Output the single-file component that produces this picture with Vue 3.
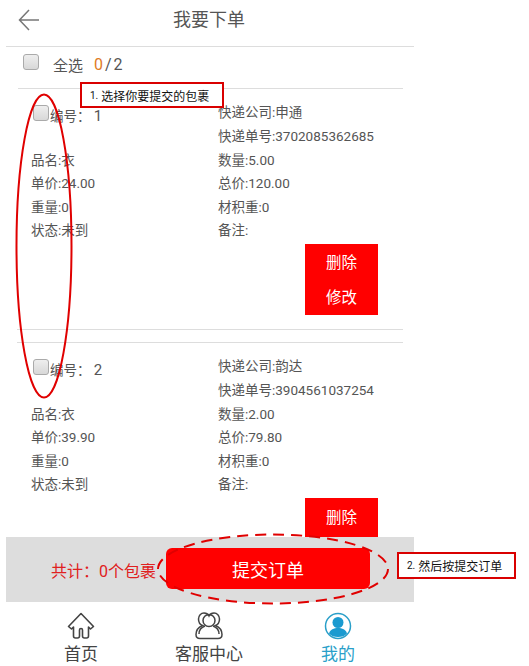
<script setup>
const packages = [
  { no: 1, company: '申通', tracking: '3702085362685', name: '衣', qty: '5.00', price: '24.00', total: '120.00', weight: '0', volume: '0', status: '未到', actions: ['删除', '修改'] },
  { no: 2, company: '韵达', tracking: '3904561037254', name: '衣', qty: '2.00', price: '39.90', total: '79.80', weight: '0', volume: '0', status: '未到', actions: ['删除'] },
]
const rows = (p) => [
  ['品名:' + p.name, '数量:' + p.qty],
  ['单价:' + p.price, '总价:' + p.total],
  ['重量:' + p.weight, '材积重:' + p.volume],
  ['状态:' + p.status, '备注:'],
]
</script>

<template>
  <div class="page">
    <div class="phone">
      <header class="top">
        <svg class="back" width="22" height="22" viewBox="0 0 22 22" fill="none" stroke="#777" stroke-width="1.5">
          <path d="M21 11H2M11 1 1.500 11 11 21" />
        </svg>
        <h1>我要下单</h1>
      </header>

      <div class="select-all">
        <span class="box"></span>
        <span class="all-label">全选</span>
        <span class="count"><b>0</b>/2</span>
      </div>

      <main class="list">
        <section v-for="p in packages" :key="p.no" class="pkg">
          <div class="head">
            <div class="no">
              <span class="box pkg-box"></span>
              <span class="no-text">编号： <em>{{ p.no }}</em></span>
            </div>
            <div class="ship">
              <div>快递公司:{{ p.company }}</div>
              <div>快递单号:{{ p.tracking }}</div>
            </div>
          </div>
          <div v-for="(r, i) in rows(p)" :key="i" class="row">
            <div>{{ r[0] }}</div>
            <div>{{ r[1] }}</div>
          </div>
          <div class="actions">
            <button v-for="a in p.actions" :key="a">{{ a }}</button>
          </div>
        </section>
      </main>

      <div class="submit-bar">
        <span class="total">共计：0个包裹</span>
        <button class="submit">提交订单</button>
      </div>

      <nav class="tabs">
        <a class="tab">
          <svg width="28" height="28" viewBox="0 0 28 28" fill="none" stroke="#444" stroke-width="1.6" stroke-linejoin="round">
            <path d="M14 1.500 1.500 14.500l3 2.500 2-2V24q0 2 2 2h2q2 0 2-2v-6q0-1.500 1.500-1.500t1.500 1.500v6q0 2 2 2h2q2 0 2-2v-9l2 2 3-2.500Z" />
          </svg>
          <span>首页</span>
        </a>
        <a class="tab">
          <svg width="28" height="28" viewBox="0 0 28 28" fill="none" stroke="#444" stroke-width="1.500">
            <path d="M14 4c-1-2-3-3-5-3C6 1 3.500 3.500 3.500 7c0 3 1.500 5.500 4 6.500C4 15 1 18.500 1 22.500 1 25 2.500 26.500 5 26.500h18c2.500 0 4-1.500 4-4 0-4-3-7.500-6.500-9 2.500-1 4-3.500 4-6.500 0-3.500-2.500-6-5.500-6-2 0-4 1-5 3Z" />
            <circle cx="14" cy="8.500" r="6" />
            <path d="M10 14c-3.500 1.200-6 4.500-6 8M18 14c3.500 1.200 6 4.500 6 8" />
          </svg>
          <span>客服中心</span>
        </a>
        <a class="tab active">
          <svg width="28" height="28" viewBox="0 0 28 28">
            <circle cx="14" cy="14" r="12.500" fill="none" stroke="#2a9fc9" stroke-width="1.500" />
            <circle cx="14" cy="10.500" r="5.500" fill="#1a9ad0" />
            <path d="M5 21.500c1-4 5-5.500 9-5.500s8 1.500 9 5.500c-2 2.500-5 3.500-9 3.500s-7-1-9-3.500Z" fill="#1a9ad0" />
          </svg>
          <span>我的</span>
        </a>
      </nav>
    </div>

    <div class="note note-one"><small>1.</small> 选择你要提交的包裹</div>
    <div class="note note-two"><small>2.</small> 然后按提交订单</div>
    <svg class="ring ring-list" width="58" height="306" viewBox="0 0 58 306" fill="none">
      <ellipse cx="29" cy="153" rx="27.500" ry="151.500" stroke="#e00000" stroke-width="2" />
    </svg>
    <svg class="ring ring-submit" width="236" height="74" viewBox="0 0 236 74" fill="none">
      <ellipse cx="118" cy="37" rx="115" ry="34.500" stroke="#e00000" stroke-width="2" stroke-dasharray="11 7" />
    </svg>
  </div>
</template>

<style>
html, body { margin: 0; background: #fff; }
</style>

<style scoped>
.page {
  position: relative;
  width: 529px;
  height: 666px;
  overflow: hidden;
  background: #fff;
  font-family: Roboto, "Noto Sans CJK SC", sans-serif;
  font-size: 13.500px;
  color: #555;
}
.phone {
  width: 414px;
  height: 666px;
  display: flex;
  flex-direction: column;
}
.top {
  position: relative;
  flex: none;
  height: 46px;
  margin-left: 6px;
  border-bottom: 1px solid #ddd;
  display: flex;
  align-items: center;
  justify-content: center;
  padding-right: 2px;
}
.top h1 {
  margin: 0 0 10px;
  font-size: 18px;
  font-weight: 400;
  color: #555;
}
.back { position: absolute; left: 12px; top: 9px; }
.select-all {
  flex: none;
  box-sizing: border-box;
  height: 42px;
  padding-bottom: 6px;
  margin: 0 11px 0 18px;
  border-bottom: 1px solid #ddd;
  display: flex;
  align-items: center;
  font-size: 15px;
}
.box {
  box-sizing: border-box;
  display: block;
  width: 16px;
  height: 16px;
  border: 1px solid #aaa;
  border-radius: 3px;
  background: linear-gradient(#eee, #d8d8d8);
}
.select-all .box { margin: 0 0 5px 5px; }
.all-label { margin-left: 14px; }
.count { margin-left: 11px; font-size: 16px; letter-spacing: 2px; }
.count b { font-weight: 400; color: #e07b1f; }
.list { flex: 1; min-height: 0; overflow: hidden; }
.pkg {
  margin: 0 11px 12px 17px;
  padding: 12px 25px 14px 14px;
  border-bottom: 1px solid #ddd;
}
.pkg:last-child { border-bottom: 0; padding-bottom: 0; margin-bottom: 0; }
.pkg + .pkg { border-top: 1px solid #ddd; }
.head, .row {
  display: grid;
  grid-template-columns: 187px 1fr;
  line-height: 23.500px;
  white-space: nowrap;
}
.row { position: relative; top: 0.500px; }
.no { display: flex; align-items: flex-start; }
.pkg-box { margin: 4px 0 0 2px; flex: none; }
.no-text { margin-left: 1px; padding-top: 4px; }
.no-text em { font-style: normal; font-size: 15px; }
.actions {
  display: flex;
  flex-direction: column;
  align-items: flex-end;
  margin-top: 2px;
}
.actions button {
  width: 73px;
  height: 35.500px;
  padding: 0 0 2px;
  border: 0;
  background: #f00;
  color: #fff;
  font: inherit;
  font-size: 15.500px;
}
.pkg:last-child .actions button { height: 39px; padding-bottom: 4px; }
.submit-bar {
  flex: none;
  box-sizing: border-box;
  height: 65px;
  margin-left: 6px;
  background: #ddd;
  display: flex;
  align-items: center;
  padding-left: 45px;
}
.total { color: #e02020; font-size: 16px; white-space: nowrap; }
.submit {
  width: 204px;
  height: 41px;
  margin: 0 0 2px 10px;
  border: 0;
  border-radius: 6px;
  background: #f00;
  color: #fff;
  font: inherit;
  font-size: 18px;
}
.tabs {
  flex: none;
  height: 64px;
  display: grid;
  grid-template-columns: 162px 94px 164px;
}
.tab {
  display: flex;
  flex-direction: column;
  align-items: center;
  color: #444;
  font-size: 17px;
  line-height: 22px;
  padding-top: 10px;
  white-space: nowrap;
}
.tab svg { display: block; margin-bottom: 3px; }
.tab.active { color: #2a9fc9; }
.note {
  position: absolute;
  box-sizing: border-box;
  background: #fff;
  border: 2px solid #d90000;
  color: #111;
  font-size: 12px;
  display: flex;
  align-items: center;
  white-space: pre;
}
.note small { font-size: 10px; }
.note-one { left: 80px; top: 82px; width: 144px; height: 26px; padding-left: 8px; }
.note-two { left: 397px; top: 552px; width: 119px; height: 27px; padding-left: 8px; }
.ring { position: absolute; }
.ring-list { left: 15px; top: 93px; }
.ring-submit { left: 155px; top: 532px; }
</style>
